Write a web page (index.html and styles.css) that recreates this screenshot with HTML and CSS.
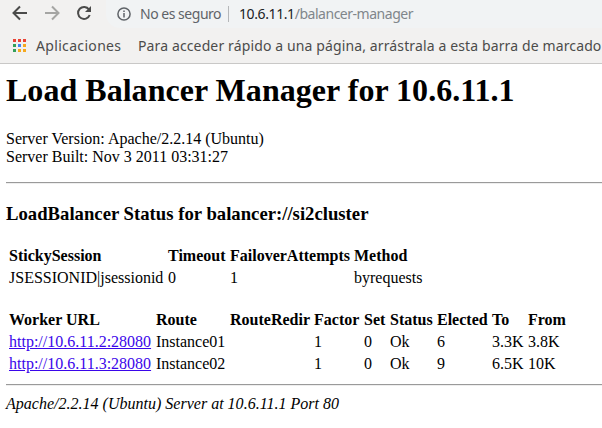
FILE: index.html
```html
<!DOCTYPE html>
<html lang="es">
<head>
<meta charset="utf-8">
<title>Balancer Manager</title>
<link rel="stylesheet" href="styles.css">
</head>
<body>
<header class="chrome">
  <div class="toolbar">
    <svg class="nav-icons" width="106" height="28" viewBox="0 0 106 28" fill="none" stroke-width="2">
      <path d="M27 13H14M20 6.5L13.5 13L20 19.5" stroke="#4b4b4a"/>
      <path d="M45 13H58M52 6.500L58.500 13L52 19.500" stroke="#a5a5a3"/>
      <path d="M89 9.500A6 6 0 1 0 89.700 15" stroke="#4b4b4a"/>
      <path d="M91 6V12H85Z" fill="#4b4b4a"/>
    </svg>
    <div class="omnibox">
      <svg class="info" width="14" height="14" viewBox="0 0 14 14" fill="none" stroke="#5f6368" stroke-width="1.500">
        <circle cx="7" cy="7" r="6.100"/>
        <path d="M7 6V10.500M7 3.400V5"/>
      </svg>
      <span class="security">No es seguro</span>
      <span class="divider"></span>
      <span class="url"><span class="host">10.6.11.1</span><span class="path">/balancer-manager</span></span>
    </div>
  </div>
  <div class="bookmarks">
    <svg class="apps" width="13" height="13" viewBox="0 0 13 13">
      <path d="M0 0h3v3H0zM5 0h3v3H5zM10 0h3v3h-3z" fill="#ea4335"/>
      <path d="M0 5h3v3H0zM0 10h3v3H0z" fill="#34a05a"/>
      <path d="M5 5h3v3H5z" fill="#4285f4"/>
      <path d="M10 5h3v3h-3zM5 10h3v3H5zM10 10h3v3h-3z" fill="#f5a91f"/>
    </svg>
    <span class="apps-label">Aplicaciones</span>
    <span class="hint">Para acceder rápido a una página, arrástrala a esta barra de marcado</span>
  </div>
</header>
<main>
  <h1>Load Balancer Manager for 10.6.11.1</h1>
  <dl>
    <dt>Server Version: Apache/2.2.14 (Ubuntu)</dt>
    <dt>Server Built: Nov 3 2011 03:31:27</dt>
  </dl>
  <hr>
  <h3>LoadBalancer Status for balancer://si2cluster</h3>
  <table class="settings">
    <colgroup><col class="sticky"><col class="timeout"><col class="failover"><col class="method"></colgroup>
    <tr><th>StickySession</th><th>Timeout</th><th>FailoverAttempts</th><th>Method</th></tr>
    <tr><td>JSESSIONID|jsessionid</td><td>0</td><td>1</td><td>byrequests</td></tr>
  </table>
  <table class="workers">
    <colgroup><col class="worker"><col class="route"><col class="redir"><col class="factor"><col class="set"><col class="status"><col class="elected"><col class="to"><col class="from"></colgroup>
    <tr><th>Worker URL</th><th>Route</th><th>RouteRedir</th><th>Factor</th><th>Set</th><th>Status</th><th>Elected</th><th>To</th><th>From</th></tr>
    <tr><td><a href="#">http://10.6.11.2:28080</a></td><td>Instance01</td><td></td><td>1</td><td>0</td><td>Ok</td><td>6</td><td>3.3K</td><td>3.8K</td></tr>
    <tr><td><a href="#">http://10.6.11.3:28080</a></td><td>Instance02</td><td></td><td>1</td><td>0</td><td>Ok</td><td>9</td><td>6.5K</td><td>10K</td></tr>
  </table>
  <hr>
  <address>Apache/2.2.14 (Ubuntu) Server at 10.6.11.1 Port 80</address>
</main>
</body>
</html>
```
FILE: styles.css
```css
body {
  margin: 0;
  background: #fff;
  color: #000;
  font: 16px/18px "Liberation Serif", serif;
  overflow: hidden;
}
.chrome {
  height: 63px;
  box-sizing: content-box;
  background: #f2f1f0;
  border-bottom: 1px solid #c9c8c7;
  font-family: "Noto Sans", sans-serif;
  white-space: nowrap;
}
.toolbar { display: flex; height: 28px; }
.nav-icons { flex: none; }
.omnibox {
  display: flex;
  align-items: center;
  flex: 1;
  height: 28px;
  box-sizing: border-box;
  padding: 0 0 0 11px;
  border-radius: 0 0 0 14px;
  background: #f1f3f4;
  font-size: 14px;
  color: #5f6368;
}
.info { flex: none; }
.security { width: 82px; margin-left: 9px; letter-spacing: -0.48px; }
.divider { width: 1px; height: 16px; margin: 0 10px 0 6px; background: #b5b7b9; }
.host { color: #202124; letter-spacing: -0.4px; }
.path { color: #80868b; letter-spacing: -0.48px; }
.bookmarks { display: flex; align-items: center; height: 35px; font-size: 14px; color: #4c4c4b; }
.apps { flex: none; margin-left: 13px; }
.apps-label { width: 86px; margin-left: 10px; letter-spacing: 0.33px; }
.hint { margin-left: 16px; letter-spacing: 0.125px; }
main { padding: 8px 0 0 6px; }
h1 { margin: 0 0 21px; font-size: 32px; line-height: 37px; letter-spacing: 0.03px; }
dl { margin: 0 0 16px; }
hr { height: 0; margin: 0; border: 0; border-top: 1px solid #9a9a9a; border-bottom: 1px solid #eee; }
h3 { margin: 19px 0 20px; font-size: 18.72px; line-height: 21px; }
table { table-layout: fixed; border-collapse: separate; border-spacing: 2px; }
th, td { height: 18px; padding: 1px; text-align: left; white-space: nowrap; }
.settings { width: 420px; margin-bottom: 18px; }
.workers { width: 564px; margin-bottom: 8px; }
.sticky { width: 157px; }
.timeout { width: 60px; }
.failover { width: 122px; }
.method { width: 71px; }
.worker { width: 145px; }
.route { width: 72px; }
.redir { width: 82px; }
.factor { width: 48px; }
.set { width: 24px; }
.status { width: 45px; }
.elected { width: 53px; }
.to { width: 34px; }
.from { width: 41px; }
a { color: #3a06ea; }
address { margin-top: 9px; letter-spacing: 0.01px; }
```
